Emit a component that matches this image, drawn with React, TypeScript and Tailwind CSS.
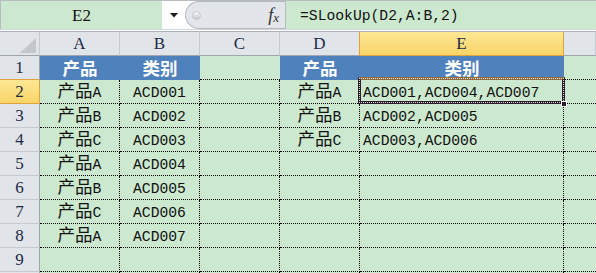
import React from 'react';

const CJK = /[\u4e00-\u9fff]/;

// mixes SimSun-like metrics: CJK full width, latin half width
const Txt = ({ s, bold }: { s: string; bold?: boolean }) => {
  const parts = s.match(/[\u4e00-\u9fff]+|[^\u4e00-\u9fff]+/g) ?? [];
  return (
    <span className="whitespace-nowrap leading-[20px]">
      {parts.map((p, i) =>
        CJK.test(p) ? (
          <span
            key={i}
            className={`font-['Noto_Sans_CJK_SC',sans-serif] text-[17.5px] ${bold ? 'font-bold' : 'font-normal'}`}
          >
            {p}
          </span>
        ) : (
          <span key={i} className="font-['Liberation_Mono',monospace] text-[14.7px]">
            {p}
          </span>
        )
      )}
    </span>
  );
};

const colA = ['产品', '产品A', '产品B', '产品C', '产品A', '产品B', '产品C', '产品A', '', ''];
const colB = ['类别', 'ACD001', 'ACD002', 'ACD003', 'ACD004', 'ACD005', 'ACD006', 'ACD007', '', ''];
const colD = ['产品', '产品A', '产品B', '产品C', '', '', '', '', '', ''];
const colE = ['类别', 'ACD001,ACD004,ACD007', 'ACD002,ACD005', 'ACD003,ACD006', '', '', '', '', '', ''];

const headers = ['A', 'B', 'C', 'D', 'E', ''];

const serif = "font-['Liberation_Serif',serif] text-[17px] text-[#1c2a48]";

export default function App() {
  return (
    <div className="relative h-[273px] w-[596px] overflow-hidden bg-white">
      {/* formula bar */}
      <div className="flex h-[29px] border-t border-[#b7bcc3] bg-[#cce8cf]">
        <div className={`flex w-[162px] items-center justify-center border-l border-[#b7bcc3] pt-px ${serif} text-[#111]`}>
          E2
        </div>
        <div className="flex w-[123px] bg-white">
          <div className="flex w-[23px] items-center justify-center">
            <svg width="8" height="5" viewBox="0 0 8 5">
              <path d="M0 0h8L4 4.5z" fill="#1a1a1a" />
            </svg>
          </div>
          <div className="flex flex-1 items-center rounded-l-full border-y border-l border-[#b4b9c0] bg-[#e2e5e9]">
            <div className="ml-[6px] h-[9px] w-[9px] rounded-full border border-[#c2c6cc] bg-linear-to-b from-[#f7f8f9] to-[#c6cad0]" />
            <div className="ml-auto mr-[6px] flex items-end font-['Liberation_Serif',serif] italic text-[#333]">
              <span className="text-[18px] leading-none">f</span>
              <span className="text-[13px] leading-none">x</span>
            </div>
          </div>
        </div>
        <div className="w-px bg-[#b7bcc3]" />
        <div className="flex flex-1 items-center pl-[14px] text-[#111]">
          <Txt s="=SLookUp(D2,A:B,2)" />
        </div>
      </div>
      <div className="h-px bg-[#d3d7dc]" />
      <div className="h-px bg-white" />

      {/* sheet */}
      <div className="grid grid-cols-[40px_80px_80px_80px_80px_204px_1fr] grid-rows-[25px_repeat(10,24px)]">
        {/* corner */}
        <div className="relative border-y border-r border-t-[#aab0b8] border-b-[#9ea5ae] border-r-[#c5cad1] bg-[#e1e4e8]">
          <svg className="absolute left-[20px] top-[6px]" width="16" height="16" viewBox="0 0 16 16">
            <path d="M16 0V15H0z" fill="#c3c7cc" />
          </svg>
        </div>
        {headers.map((h, i) => {
          const sel = h === 'E';
          return (
            <div
              key={i}
              className={`flex items-center justify-center border-y border-r border-t-[#aab0b8] ${serif} ${
                sel
                  ? 'border-b-[#e0a23e] border-r-[#e0a23e] bg-linear-to-b from-[#fde795] to-[#f8d465]'
                  : h === 'D'
                    ? 'border-b-[#9ea5ae] border-r-[#e0a23e] bg-[#e1e4e8]'
                    : 'border-b-[#9ea5ae] border-r-[#c5cad1] bg-[#e1e4e8]'
              }`}
            >
              {h}
            </div>
          );
        })}

        {colA.map((_, r) => {
          const first = r === 0;
          const rowSel = r === 1;
          const cell = 'flex items-center border-b border-r border-dotted border-black bg-[#cce8cf] text-[#111]';
          const blue = 'flex items-center justify-center bg-[#4f81bd] text-white';
          return (
            <React.Fragment key={r}>
              <div
                className={`flex items-center justify-center border-b border-r ${serif} ${
                  rowSel
                    ? 'border-b-[#e0a23e] border-r-[#e0a23e] bg-linear-to-b from-[#fde795] to-[#f8d465]'
                    : first
                      ? 'border-b-[#e0a23e] border-r-[#9ea5ae] bg-[#e1e4e8]'
                      : 'border-b-[#c5cad1] border-r-[#9ea5ae] bg-[#e1e4e8]'
                }`}
              >
                {r < 9 ? r + 1 : ''}
              </div>
              {first ? (
                <>
                  <div className={blue}><Txt s={colA[r]} bold /></div>
                  <div className={blue}><Txt s={colB[r]} bold /></div>
                  <div className="border-b border-dotted border-black bg-[#cce8cf]" />
                  <div className={blue}><Txt s={colD[r]} bold /></div>
                  <div className={blue}><Txt s={colE[r]} bold /></div>
                  <div className="border-b border-dotted border-black bg-[#cce8cf]" />
                </>
              ) : (
                <>
                  <div className={`${cell} justify-center`}><Txt s={colA[r]} /></div>
                  <div className={`${cell} justify-center`}><Txt s={colB[r]} /></div>
                  <div className={cell} />
                  <div className={`${cell} justify-center`}><Txt s={colD[r]} /></div>
                  <div className={`${cell} pl-[3px]`}><Txt s={colE[r]} /></div>
                  <div className="border-b border-dotted border-black bg-[#cce8cf]" />
                </>
              )}
            </React.Fragment>
          );
        })}
      </div>

      {/* active cell E2 */}
      <div className="absolute left-[358px] top-[77px] h-[27px] w-[207px] border-[3px] border-[#2b1f2b] border-t-[#8d6a3f]">
        <div className="absolute inset-[-2px] border border-dotted border-white/80" />
      </div>
      <div className="absolute left-[561px] top-[101px] h-[6px] w-[6px] border border-white bg-[#2b1f2b]" />
    </div>
  );
}
